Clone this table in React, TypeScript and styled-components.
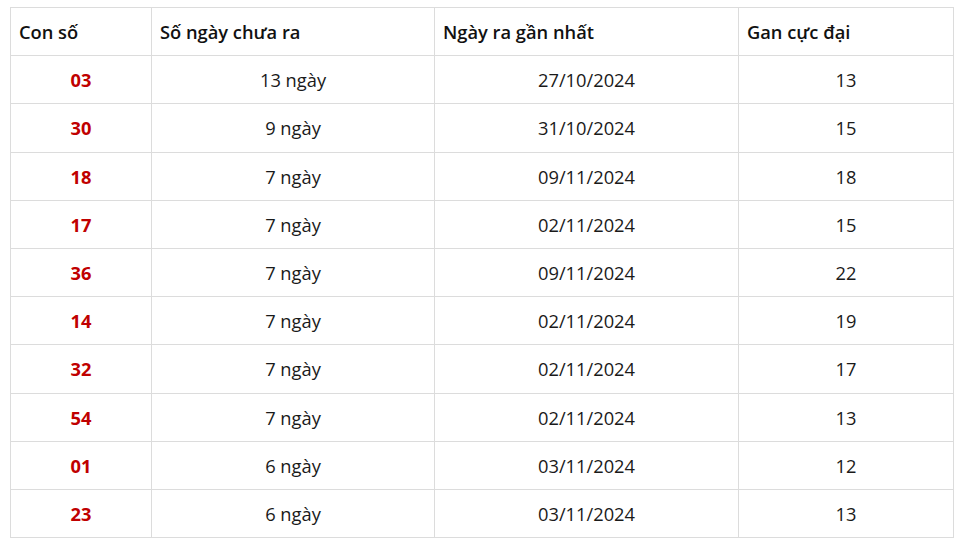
import React from 'react';
import styled, { createGlobalStyle } from 'styled-components';

const GlobalStyle = createGlobalStyle`
  body {
    margin: 0;
    background: #ffffff;
    font-family: "Open Sans", "Noto Sans", Arial, sans-serif;
    color: #1a1a1a;
  }
`;

const Page = styled.div`
  padding: 7px 4px 0 10px;
`;

const Table = styled.table`
  width: 943px;
  border-collapse: collapse;
  table-layout: fixed;
  font-size: 18.3px;
`;

const HeadCell = styled.th<{ $w: number }>`
  width: ${(p) => p.$w}px;
  height: 48.2px;
  padding: 0 8px;
  box-sizing: border-box;
  border: 1px solid #dcdcdc;
  text-align: left;
  font-weight: 600;
  color: #111;
`;

const Cell = styled.td<{ $num?: boolean }>`
  height: 48.2px;
  padding: 0 8px;
  box-sizing: border-box;
  border: 1px solid #dcdcdc;
  text-align: center;
  font-weight: ${(p) => (p.$num ? 700 : 400)};
  color: ${(p) => (p.$num ? '#c00000' : '#1a1a1a')};
`;

const columns: [string, number][] = [
  ['Con số', 141],
  ['Số ngày chưa ra', 283],
  ['Ngày ra gần nhất', 304],
  ['Gan cực đại', 215],
];

const rows = [
  ['03', '13 ngày', '27/10/2024', '13'],
  ['30', '9 ngày', '31/10/2024', '15'],
  ['18', '7 ngày', '09/11/2024', '18'],
  ['17', '7 ngày', '02/11/2024', '15'],
  ['36', '7 ngày', '09/11/2024', '22'],
  ['14', '7 ngày', '02/11/2024', '19'],
  ['32', '7 ngày', '02/11/2024', '17'],
  ['54', '7 ngày', '02/11/2024', '13'],
  ['01', '6 ngày', '03/11/2024', '12'],
  ['23', '6 ngày', '03/11/2024', '13'],
];

export default function App() {
  return (
    <Page>
      <GlobalStyle />
      <Table>
        <thead>
          <tr>
            {columns.map(([label, w]) => (
              <HeadCell key={label} $w={w}>
                {label}
              </HeadCell>
            ))}
          </tr>
        </thead>
        <tbody>
          {rows.map((r) => (
            <tr key={r[0]}>
              <Cell $num>{r[0]}</Cell>
              <Cell>{r[1]}</Cell>
              <Cell>{r[2]}</Cell>
              <Cell>{r[3]}</Cell>
            </tr>
          ))}
        </tbody>
      </Table>
    </Page>
  );
}
